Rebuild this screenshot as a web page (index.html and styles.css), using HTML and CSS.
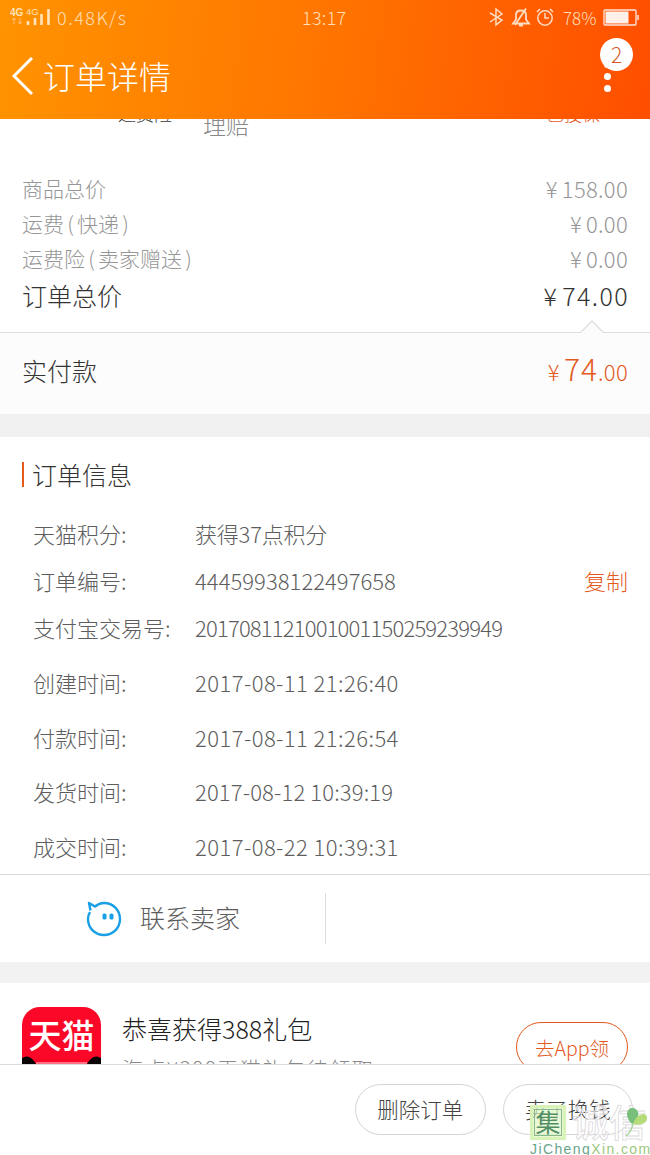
FILE: index.html
```
<!DOCTYPE html>
<html lang="zh-CN">
<head>
<meta charset="utf-8">
<title>订单详情</title>
<link rel="stylesheet" href="styles.css">
</head>
<body>
<div class="screen">
  <header class="header">
    <div class="status">
      <svg class="signal" width="42" height="20" viewBox="0 0 42 20">
        <text class="net" x="0" y="9">4G</text>
        <text class="net net-thin" x="16" y="8">4G</text>
        <path d="M4 11v6M2 13l2-2 2 2M10 11v6M8 15l2 2 2-2" stroke="#ffc27d" fill="none"/>
        <path d="M18 14v4M25 11v7M31.500 7v11M38.500 2v16" stroke="#ffe3bd" stroke-width="2.600" fill="none"/>
      </svg>
      <span class="speed">0.48K/s</span>
      <span class="clock">13:17</span>
      <svg class="indicators" width="66" height="20" viewBox="0 0 66 20" fill="none" stroke="#ffdcc2" stroke-width="1.500">
        <path d="M1 6l12 7-6 5V2l6 5-12 8"/>
        <path d="M24 16.500h16l-3-4V8c0-3-2-4.500-5-4.500S27 5 27 8v4.500zM30 18.500h4M26 18L37 1.500" stroke-width="1.800"/>
        <circle cx="56" cy="11" r="7.200"/>
        <path d="M56 6v5h4M48 5l3-3M64 5l-3-3"/>
      </svg>
      <span class="percent">78%</span>
      <svg class="battery" width="36" height="17" viewBox="0 0 36 17">
        <rect x="1" y="1" width="32" height="15" rx="1" fill="none" stroke="#ffe6dc" stroke-width="1.300"/>
        <rect x="2.500" y="2.500" width="23" height="12" fill="#fff0e9"/>
        <path d="M35 6v5" stroke="#ffe6dc" stroke-width="1.500"/>
      </svg>
    </div>
    <div class="titlebar">
      <svg class="back" width="22" height="40" viewBox="0 0 22 40"><path d="M20 1L2 19l18 18" fill="none" stroke="#fff" stroke-width="3"/></svg>
      <h1 class="title">订单详情</h1>
      <div class="more"><i class="dot"></i><i class="dot"></i><i class="dot"></i><b class="badge">2</b></div>
    </div>
  </header>

  <main class="content">
    <div class="insurance">
      <span class="ins-name">运费险</span>
      <span class="ins-desc">理赔</span>
      <span class="ins-state">已投保</span>
    </div>
    <section class="totals">
      <div class="line"><span class="label">商品总价</span><span class="price"><i class="yen">¥</i>158.00</span></div>
      <div class="line"><span class="label">运费<i class="paren">(</i>快递<i class="paren">)</i></span><span class="price"><i class="yen">¥</i>0.00</span></div>
      <div class="line"><span class="label">运费险<i class="paren">(</i>卖家赠送<i class="paren">)</i></span><span class="price"><i class="yen">¥</i>0.00</span></div>
      <div class="line total"><span class="label">订单总价</span><span class="sum"><i class="yen">¥</i>74.00</span></div>
    </section>
    <section class="paid">
      <svg class="notch" width="24" height="13" viewBox="0 0 24 13"><path d="M0 13L12 1l12 12" fill="#fcfcfc" stroke="#dedede" stroke-width="1.300"/></svg>
      <span class="paid-label">实付款</span>
      <span class="paid-price"><i class="yen">¥</i><b class="big">74</b>.00</span>
    </section>
    <section class="info">
      <h2 class="info-title">订单信息</h2>
      <div class="row"><span class="key">天猫积分:</span><span class="val points">获得37点积分</span></div>
      <div class="row"><span class="key">订单编号:</span><span class="val order">44459938122497658</span><span class="copy">复制</span></div>
      <div class="row trade-row"><span class="key">支付宝交易号:</span><span class="val trade">2017081121001001150259239949</span></div>
      <div class="row time"><span class="key">创建时间:</span><span class="val date">2017-08-11 21:26:40</span></div>
      <div class="row time"><span class="key">付款时间:</span><span class="val date">2017-08-11 21:26:54</span></div>
      <div class="row time"><span class="key">发货时间:</span><span class="val date short">2017-08-12 10:39:19</span></div>
      <div class="row time"><span class="key">成交时间:</span><span class="val date">2017-08-22 10:39:31</span></div>
    </section>
    <section class="contact">
      <div class="seller">
        <svg width="36" height="36" viewBox="0 0 36 36">
          <path d="M4.500 9.500L3 2l6 3.500C12 3 15 2 18 2c9 0 16 7 16 16s-7 16-16 16S2 27 2 18c0-3 .8-5 2-7" fill="none" stroke="#199fe5" stroke-width="2.400" stroke-linejoin="round"/>
          <rect x="16.500" y="12.500" width="4" height="6" rx="1.600" fill="#199fe5"/><rect x="23.500" y="12.500" width="4" height="6" rx="1.600" fill="#199fe5"/>
        </svg>
        <span class="seller-text">联系卖家</span>
      </div>
    </section>
    <section class="promo">
      <div class="tmall">
        <span class="tmall-name">天猫</span>
        <svg width="79" height="8" viewBox="0 0 79 8"><path d="M0 2Q8-3 14 8H0zM79 2Q71-3 65 8h14z" fill="#080405"/><path d="M14 7h51" stroke="#ffd7df"/></svg>
      </div>
      <div class="gift"><div class="gift-title">恭喜获得388礼包</div><div class="gift-sub">海点¥388天猫礼包待领取</div></div>
      <div class="go">去App领</div>
    </section>
  </main>

  <footer class="footer">
    <span class="btn">删除订单</span>
    <span class="btn">卖了换钱</span>
  </footer>

  <div class="mark">
    <div class="mark-top">
      <span class="seal">集</span><span class="outline">诚信</span>
      <svg class="leaf" width="24" height="32" viewBox="0 0 24 32"><path d="M7 18C-2 9 3 1 8 2c6 1 7 7 3 15z" fill="#79bf7c"/><path d="M8 18C11 8 21 5 22 11c1 6-6 9-14 7z" fill="#b6dc7a"/><path d="M8 17Q7 25 1 30" fill="none" stroke="#a9d49b" stroke-width="1.500"/></svg>
    </div>
    <div class="mark-url"><span>JiCheng</span><span class="lime">Xin.com</span></div>
  </div>
</div>
</body>
</html>
```
FILE: styles.css
```
* { box-sizing: border-box; }
body { margin: 0; font-family: "Noto Sans CJK SC", sans-serif; font-weight: 300; color: #333; }
h1, h2 { margin: 0; font-weight: 300; }
b { font-weight: 300; }
i { font-style: normal; }
.screen { position: relative; width: 650px; height: 1155px; display: flex; flex-direction: column; overflow: hidden; background: #fff; }
.header { position: relative; z-index: 1; height: 119px; flex: none; background: linear-gradient(97deg, #ff9300 0%, #ff7800 45%, #ff4e00 100%); color: #fff; }
.status { height: 34px; display: flex; align-items: center; padding: 0 10px; color: #ffdfb8; font-size: 18px; line-height: 31px; }
.net { font: bold 10px "Liberation Sans", sans-serif; fill: #ffe3bd; }
.net-thin { font-weight: 400; font-size: 9.500px; }
.speed { margin-left: 5px; width: 245px; letter-spacing: 1.500px; }
.clock { width: 187px; letter-spacing: .3px; }
.percent { width: 40px; margin-left: 8px; font-size: 17px; }
.indicators, .battery, .signal { flex: none; }
.titlebar { height: 85px; display: flex; align-items: center; padding: 0 39px 0 12px; }
.title { margin-left: 9px; font-size: 32px; line-height: 40px; flex: 1; padding-bottom: 3px; }
.more { position: relative; width: 8px; display: flex; flex-direction: column; align-items: center; gap: 5px; }
.dot { width: 7px; height: 7px; border-radius: 50%; background: #fff; }
.badge { position: absolute; left: -3px; top: -23px; width: 33px; height: 33px; border-radius: 50%; background: #fff; color: #d25a2a; font-size: 21px; line-height: 32px; text-align: center; }
.content { flex: 1; min-height: 0; overflow: hidden; }
.insurance { height: 53px; margin-top: -20px; padding: 0 50px 0 118px; display: flex; font-size: 18px; line-height: 29px; }
.ins-name { width: 85px; }
.ins-desc { flex: 1; font-size: 23px; color: #888; line-height: 51px; }
.ins-state { color: #e4591c; }
.totals { height: 180px; padding: 19px 22px 0; color: #969696; font-size: 22px; }
.line { display: flex; justify-content: space-between; height: 35px; line-height: 35px; }
.label { font-size: 21px; }
.paren { display: inline-block; width: 13px; text-align: center; }
.price { letter-spacing: .3px; }
.yen { margin-right: 4px; }
.line.total { height: 38px; line-height: 38px; color: #333; font-size: 25px; }
.total .label { font-size: 25px; }
.sum { letter-spacing: 1.400px; margin-right: -1px; }
.paid { position: relative; height: 82px; border-top: 1px solid #dedede; background: #fcfcfc; padding: 0 22px; display: flex; justify-content: space-between; line-height: 74px; font-size: 25px; }
.notch { position: absolute; left: 580px; top: -13px; }
.paid-price { color: #e4591c; font-size: 22px; letter-spacing: .3px; }
.big { font-size: 30px; letter-spacing: 1px; line-height: 70px; }
.info { border-top: 23px solid #f0f0f0; border-bottom: 1px solid #d9d9d9; height: 461px; padding: 25px 22px 0; color: #5d5d5d; font-size: 22px; }
.info-title { height: 25px; margin-bottom: 23px; border-left: 2px solid #e4591c; padding-left: 8px; font-size: 25px; line-height: 24px; color: #333; }
.row { display: flex; height: 47px; line-height: 47px; padding-left: 11px; white-space: nowrap; }
.key { width: 162px; flex: none; }
.val { flex: 1; }
.points { letter-spacing: -.2px; }
.order { letter-spacing: .05px; }
.trade-row { margin-bottom: 4px; }
.trade { letter-spacing: -.8px; }
.date { letter-spacing: .45px; }
.date.short { letter-spacing: .15px; }
.row.time { height: 54.700px; line-height: 54.700px; }
.copy { color: #e4591c; }
.contact { height: 87px; padding: 18px 0; }
.seller { width: 326px; height: 51px; border-right: 1px solid #dedede; display: flex; align-items: center; padding-left: 86px; gap: 18px; font-size: 25px; color: #5d5d5d; }
.seller-text { padding-bottom: 3px; }
.promo { border-top: 21px solid #f2f2f2; padding: 24px 22px 0; display: flex; align-items: flex-start; height: 150px; }
.tmall { width: 79px; height: 79px; flex: none; border-radius: 18px 18px 0 0; overflow: hidden; background: #fb0829; color: #fff; display: flex; flex-direction: column; align-items: center; font-size: 33px; line-height: 55px; font-weight: 500; }
.tmall-name { height: 49px; }
.gift { flex: 1; margin-left: 21px; white-space: nowrap; }
.gift-title { font-size: 25px; line-height: 43px; color: #222; }
.gift-sub { font-size: 21px; line-height: 37px; letter-spacing: 1.400px; color: #8a8a8a; }
.go { margin-top: 15px; width: 112px; height: 50px; border: 1px solid #e4591c; border-radius: 25px; color: #e4591c; font-size: 19.500px; line-height: 50px; text-align: center; }
.footer { flex: none; height: 91px; border-top: 1px solid #dcdcdc; background: #fff; display: flex; justify-content: flex-end; gap: 17px; padding: 19px 17px 0 0; }
.btn { width: 130.500px; height: 51px; border: 1px solid #d4d4d4; border-radius: 26px; line-height: 47px; text-align: center; font-size: 21.500px; color: #444; }
.mark { position: absolute; left: 530px; top: 1105px; width: 124px; }
.mark-top { display: flex; height: 35px; }
.seal { width: 36px; height: 35px; border: 3px solid #d9f2b8; outline: 1.500px solid #85b98d; outline-offset: -5px; background: rgba(224, 246, 196, .7); font-size: 25px; line-height: 27px; text-align: center; color: #528f67; font-weight: 400; }
.outline { margin-left: 6px; width: 78px; font-size: 37px; line-height: 33px; font-weight: 500; color: rgba(255, 255, 255, .6); -webkit-text-stroke: .8px #dcd8dc; }
.leaf { position: absolute; left: 95px; top: 1px; }
.mark-url { display: flex; font: 14px/19px "Liberation Sans", sans-serif; letter-spacing: 1.400px; color: #67a58c; }
.lime { color: #9dc77c; }
```
